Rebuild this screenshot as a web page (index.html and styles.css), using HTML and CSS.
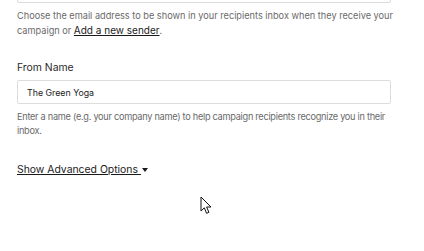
FILE: index.html
```html
<!DOCTYPE html>
<html>
<head>
<meta charset="utf-8">
<link rel="stylesheet" href="styles.css">
</head>
<body>
<div class="form">
  <div class="field field-top">
    <div class="input input-cut"></div>
    <p class="help">Choose the email address to be shown in your recipients inbox when they receive your<br>campaign or <a class="link" href="#">Add a new sender</a>.</p>
  </div>
  <div class="field">
    <label class="label">From Name</label>
    <div class="input">The Green Yoga</div>
    <p class="help help-tight">Enter a name (e.g. your company name) to help campaign recipients recognize you in their<br>inbox.</p>
  </div>
  <a class="advanced" href="#"><span class="adv-text">Show Advanced Options </span><span class="caret"></span></a>
</div>
<svg class="cursor" width="13" height="19" viewBox="0 0 13 19"><path d="M1 1 L1 15 L4.3 11.8 L6.6 17.3 L8.9 16.3 L6.6 11 L11 11 Z" fill="#fff" stroke="#111" stroke-width="1" stroke-linejoin="round"/></svg>
</body>
</html>
```
FILE: styles.css
```css
html, body { margin: 0; padding: 0; background: #fff; }
body { font-family: Inter, "Noto Sans", sans-serif; overflow: hidden; width: 424px; height: 251px; position: relative; }
.form { padding-left: 17px; width: 374px; display: flex; flex-direction: column; }
.field { display: flex; flex-direction: column; }
.input { box-sizing: border-box; height: 24px; border: 1px solid #dcdcdc; border-radius: 2px; font-size: 8.8px; color: #222; padding: 0 9px; display: flex; align-items: center; }
.input-cut { margin-top: -21px; }
.help { margin: 7px 0 0; font-size: 9.2px; line-height: 15px; color: #6a6a6a; white-space: nowrap; }
.link { color: #1a1a1a; text-decoration: underline; font-size: 10px; line-height: 14px; }
.field-top { margin-bottom: 23px; }
.label { font-size: 10.4px; color: #2a2a2a; line-height: 14px; margin-bottom: 5px; }
.field .input + .help { margin-top: 6px; line-height: 14px; }
.help-tight { letter-spacing: -0.28px; }
.advanced { margin-top: 25px; font-size: 10.4px; line-height: 14px; color: #1a1a1a; text-decoration: none; display: flex; align-items: center; }
.adv-text { text-decoration: underline; white-space: pre; }
.caret { width: 0; height: 0; border-left: 3.5px solid transparent; border-right: 3.5px solid transparent; border-top: 4px solid #1a1a1a; margin-left: 1px; }
.cursor { position: absolute; left: 200px; top: 196px; }
```
